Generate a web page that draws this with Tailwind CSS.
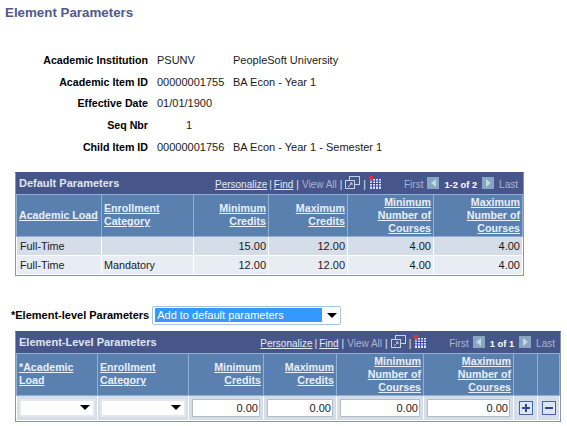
<!DOCTYPE html>
<html lang="en">
<head>
  <meta charset="UTF-8" />
  <title>Element Parameters</title>
  <script src="https://cdn.jsdelivr.net/npm/@tailwindcss/browser@4"></script>
</head>
<body class="bg-white font-['Liberation_Sans',Arial,sans-serif] text-[11px] leading-[14px] text-[#1a1a1a] w-[567px] h-[426px] overflow-hidden">

  <!-- Title -->
  <h1 class="pl-[5px] pt-[5px] text-[13.33px] leading-[16px] font-bold text-[#51598f]">Element Parameters</h1>

  <!-- Key fields -->
  <div class="mt-[28px] grid grid-cols-[148px_67px_auto] gap-x-[9px] auto-rows-[21.75px] items-center">
    <div class="font-bold text-[10.67px] text-right text-black">Academic Institution</div><div>PSUNV</div><div>PeopleSoft University</div>
    <div class="font-bold text-[10.67px] text-right text-black">Academic Item ID</div><div>00000001755</div><div>BA Econ - Year 1</div>
    <div class="font-bold text-[10.67px] text-right text-black">Effective Date</div><div>01/01/1900</div><div></div>
    <div class="font-bold text-[10.67px] text-right text-black">Seq Nbr</div><div class="pl-[29px]">1</div><div></div>
    <div class="font-bold text-[10.67px] text-right text-black">Child Item ID</div><div>00000001756</div><div>BA Econ - Year 1 - Semester 1</div>
  </div>

  <!-- Default Parameters grid -->
  <div class="mt-[14px] ml-[15px] w-[509px] border border-[#8a94b8] border-t-[#47568a]">
    <div class="h-[21px] bg-[#47568a] flex items-center pl-[3px] pr-[5px] text-[#dfe6f2]">
      <span class="font-bold">Default Parameters</span>
      <div class="ml-auto flex items-center text-[10px] leading-[12px] pt-[3px]">
        <a class="underline text-[#e4ebf5]">Personalize</a><span class="mx-[2px]">|</span><a class="underline text-[#e4ebf5]">Find</a><span class="mx-[3px]">|</span><span class="text-[#a9b5d0]">View All</span><span class="mx-[3px]">|</span>
        <svg class="w-[15px] h-[13px] -mt-[4px]" viewBox="0 0 15 13" fill="none" stroke="#c5d3e6"><rect x="4.5" y="0.5" width="10" height="8" /><rect x="0.5" y="4.5" width="9" height="8" fill="#47568a" /><path d="M3 11l4-4M5 7h2v2" /></svg>
        <span class="mx-[3px]">|</span>
        <svg class="w-[12px] h-[13px] -mt-[5px]" viewBox="0 0 12 13"><rect x="1" y="3" width="11" height="10" fill="#dfe6f8" /><path d="M1 5h11M1 7.5h11M1 10h11M3.5 3v10M6.5 3v10M9.5 3v10" stroke="#3f48b8" /><rect x="0" y="0" width="4" height="4" fill="#d8343c" /></svg>
        <span class="ml-[23px] text-[#a9b5d0]">First</span>
        <span class="ml-[4px] w-[12px] h-[12px] -mt-[4px] bg-[#88a5c2] flex items-center justify-center"><span class="border-y-[4px] border-y-transparent border-r-[5px] border-r-[#c5d6e8]"></span></span>
        <span class="mx-[5px] text-[9.33px] font-bold text-white">1-2 of 2</span>
        <span class="w-[12px] h-[12px] -mt-[4px] bg-[#88a5c2] flex items-center justify-center"><span class="border-y-[4px] border-y-transparent border-l-[5px] border-l-[#c5d6e8]"></span></span>
        <span class="ml-[5px] text-[#a9b5d0]">Last</span>
      </div>
    </div>
    <table class="w-full table-fixed border-collapse">
      <colgroup><col class="w-[85px]" /><col class="w-[92px]" /><col class="w-[75px]" /><col class="w-[79px]" /><col class="w-[86px]" /><col /></colgroup>
      <thead>
        <tr class="h-[42px] bg-[#5a80b0] font-bold text-[10.67px] leading-[13px] text-[#e8eff8] underline">
          <th class="border border-[#8fb0d2] px-[2px] text-left font-bold">Academic Load</th>
          <th class="border border-[#8fb0d2] px-[2px] text-left font-bold">Enrollment<br />Category</th>
          <th class="border border-[#8fb0d2] px-[2px] text-right font-bold">Minimum<br />Credits</th>
          <th class="border border-[#8fb0d2] px-[2px] text-right font-bold">Maximum<br />Credits</th>
          <th class="border border-[#8fb0d2] px-[2px] text-right font-bold">Minimum<br />Number of<br />Courses</th>
          <th class="border border-[#8fb0d2] px-[2px] text-right font-bold">Maximum<br />Number of<br />Courses</th>
        </tr>
      </thead>
      <tbody>
        <tr class="h-[19px] bg-[#d5dde8] [&>td]:pt-[1px]">
          <td class="border border-white px-[3px] text-[10.8px]">Full-Time</td><td class="border border-white px-[2px]"></td><td class="border border-white px-[2px] text-right">15.00</td><td class="border border-white px-[2px] text-right">12.00</td><td class="border border-white px-[2px] text-right">4.00</td><td class="border border-white px-[2px] text-right">4.00</td>
        </tr>
        <tr class="h-[19px] bg-[#e8edf4] [&>td]:pt-[1px]">
          <td class="border border-white px-[3px] text-[10.8px]">Full-Time</td><td class="border border-white px-[2px] text-[10.8px]">Mandatory</td><td class="border border-white px-[2px] text-right">12.00</td><td class="border border-white px-[2px] text-right">12.00</td><td class="border border-white px-[2px] text-right">4.00</td><td class="border border-white px-[2px] text-right">4.00</td>
        </tr>
      </tbody>
    </table>
  </div>

  <!-- Element-level dropdown -->
  <div class="mt-[30px] ml-[11px] flex items-center h-[19px]">
    <span class="font-bold text-black">*Element-level Parameters</span>
    <div class="ml-[3px] w-[189px] h-[19px] bg-white border border-[#a9c4de] rounded-[2px] flex items-center pl-[2px]">
      <span class="w-[167px] h-[14px] bg-[#3399ff] text-white pl-[1px] border border-dotted border-[#c87a30] flex items-center">Add to default parameters</span>
      <span class="ml-[5px] border-x-[5px] border-x-transparent border-t-[5px] border-t-black"></span>
    </div>
  </div>

  <!-- Element-Level Parameters grid -->
  <div class="mt-[6px] ml-[15px] w-[546px] border border-[#8a94b8] border-t-[#47568a]">
    <div class="h-[21px] bg-[#47568a] flex items-center pl-[3px] pr-[5px] text-[#dfe6f2]">
      <span class="font-bold">Element-Level Parameters</span>
      <div class="ml-auto flex items-center text-[10px] leading-[12px] pt-[3px]">
        <a class="underline text-[#e4ebf5]">Personalize</a><span class="mx-[2px]">|</span><a class="underline text-[#e4ebf5]">Find</a><span class="mx-[3px]">|</span><span class="text-[#a9b5d0]">View All</span><span class="mx-[3px]">|</span>
        <svg class="w-[15px] h-[13px] -mt-[4px]" viewBox="0 0 15 13" fill="none" stroke="#c5d3e6"><rect x="4.5" y="0.5" width="10" height="8" /><rect x="0.5" y="4.5" width="9" height="8" fill="#47568a" /><path d="M3 11l4-4M5 7h2v2" /></svg>
        <span class="mx-[3px]">|</span>
        <svg class="w-[12px] h-[13px] -mt-[5px]" viewBox="0 0 12 13"><rect x="1" y="3" width="11" height="10" fill="#dfe6f8" /><path d="M1 5h11M1 7.5h11M1 10h11M3.5 3v10M6.5 3v10M9.5 3v10" stroke="#3f48b8" /><rect x="0" y="0" width="4" height="4" fill="#d8343c" /></svg>
        <span class="ml-[23px] text-[#a9b5d0]">First</span>
        <span class="ml-[4px] w-[12px] h-[12px] -mt-[4px] bg-[#88a5c2] flex items-center justify-center"><span class="border-y-[4px] border-y-transparent border-r-[5px] border-r-[#c5d6e8]"></span></span>
        <span class="mx-[5px] text-[9.33px] font-bold text-white">1 of 1</span>
        <span class="w-[12px] h-[12px] -mt-[4px] bg-[#88a5c2] flex items-center justify-center"><span class="border-y-[4px] border-y-transparent border-l-[5px] border-l-[#c5d6e8]"></span></span>
        <span class="ml-[5px] text-[#a9b5d0]">Last</span>
      </div>
    </div>
    <table class="w-full table-fixed border-collapse">
      <colgroup><col class="w-[81px]" /><col class="w-[91px]" /><col class="w-[75px]" /><col class="w-[73px]" /><col class="w-[87px]" /><col class="w-[90px]" /><col class="w-[24px]" /><col /></colgroup>
      <thead>
        <tr class="h-[42px] bg-[#5a80b0] font-bold text-[10.67px] leading-[13px] text-[#e8eff8] underline">
          <th class="border border-[#8fb0d2] px-[2px] text-left font-bold">*Academic<br />Load</th>
          <th class="border border-[#8fb0d2] px-[2px] text-left font-bold">Enrollment<br />Category</th>
          <th class="border border-[#8fb0d2] px-[2px] text-right font-bold">Minimum<br />Credits</th>
          <th class="border border-[#8fb0d2] px-[2px] text-right font-bold">Maximum<br />Credits</th>
          <th class="border border-[#8fb0d2] px-[2px] text-right font-bold">Minimum<br />Number of<br />Courses</th>
          <th class="border border-[#8fb0d2] px-[2px] text-right font-bold">Maximum<br />Number of<br />Courses</th>
          <th class="border border-[#8fb0d2]"></th>
          <th class="border border-[#8fb0d2]"></th>
        </tr>
      </thead>
      <tbody>
        <tr class="h-[25px] bg-[#d5dde8]">
          <td class="border border-white px-[2px]"><div class="h-[18px] bg-white border-2 border-[#e4e8ee] flex items-center justify-end pr-[3px]"><span class="border-x-[5px] border-x-transparent border-t-[5px] border-t-black"></span></div></td>
          <td class="border border-white px-[2px]"><div class="h-[18px] bg-white border-2 border-[#e4e8ee] flex items-center justify-end pr-[3px]"><span class="border-x-[5px] border-x-transparent border-t-[5px] border-t-black"></span></div></td>
          <td class="border border-white px-[3px]"><div class="h-[18px] bg-white border border-[#b8bcc4] flex items-center justify-end pr-[1px]">0.00</div></td>
          <td class="border border-white px-[3px]"><div class="h-[18px] bg-white border border-[#b8bcc4] flex items-center justify-end pr-[1px]">0.00</div></td>
          <td class="border border-white px-[3px]"><div class="h-[18px] bg-white border border-[#b8bcc4] flex items-center justify-end pr-[1px]">0.00</div></td>
          <td class="border border-white px-[3px]"><div class="h-[18px] bg-white border border-[#b8bcc4] flex items-center justify-end pr-[1px]">0.00</div></td>
          <td class="border border-white"><div class="mx-auto w-[14px] h-[14px] bg-[#dce6f4] border border-[#4a62a8] flex items-center justify-center"><svg class="w-[10px] h-[10px]" viewBox="0 0 10 10"><path d="M1 5h8M5 1v8" stroke="#33478f" stroke-width="2" /></svg></div></td>
          <td class="border border-white"><div class="mx-auto w-[14px] h-[14px] bg-[#dce6f4] border border-[#4a62a8] flex items-center justify-center"><svg class="w-[10px] h-[10px]" viewBox="0 0 10 10"><path d="M1 5h8" stroke="#33478f" stroke-width="2" /></svg></div></td>
        </tr>
      </tbody>
    </table>
  </div>
</body>
</html>
